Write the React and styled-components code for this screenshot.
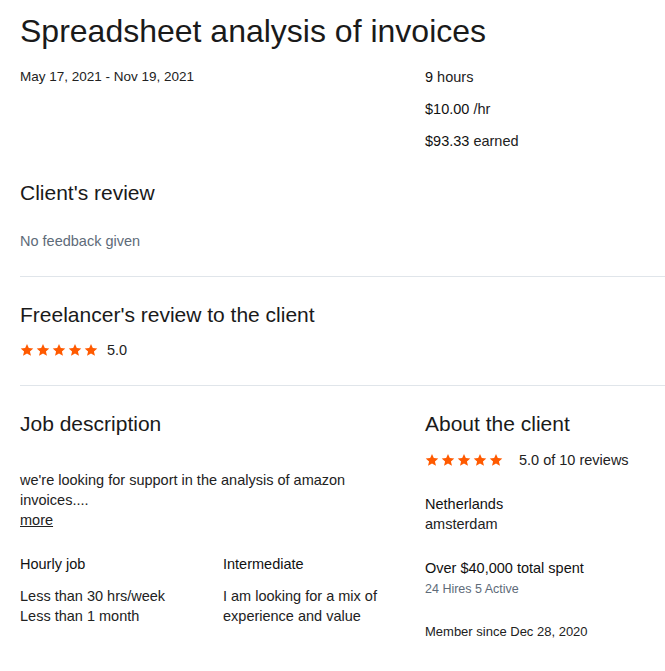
import React from "react";
import styled, { createGlobalStyle } from "styled-components";

const GlobalStyle = createGlobalStyle`
  body {
    margin: 0;
    background: #fff;
    font-family: "Liberation Sans", Arial, sans-serif;
    color: #1f1f1f;
  }
`;

const ORANGE = "#ff5a00";

const Star = ({ size = 14 }) => (
  <svg width={size} height={size} viewBox="0 0 24 24">
    <path
      fill={ORANGE}
      d="M12 1.5l3.1 7.1 7.7.7-5.8 5.1 1.8 7.6L12 18l-6.8 4 1.8-7.6-5.8-5.1 7.7-.7z"
    />
  </svg>
);

const Stars = ({ count = 5 }) => (
  <StarRow>
    {Array.from({ length: count }).map((_, i) => (
      <Star key={i} />
    ))}
  </StarRow>
);

const App = () => {
  return (
    <React.Fragment>
      <GlobalStyle />
      <Page>
        <Title>Spreadsheet analysis of invoices</Title>

        <MetaGrid>
          <DateRange>May 17, 2021 - Nov 19, 2021</DateRange>
          <MetaList>
            <Text>
              <Strong>9</Strong> hours
            </Text>
            <Text>
              <Strong>$10.00</Strong> /hr
            </Text>
            <Text>
              <Strong>$93.33</Strong> earned
            </Text>
          </MetaList>
        </MetaGrid>

        <Section>
          <Heading>Client's review</Heading>
          <Muted $top={26}>No feedback given</Muted>
        </Section>

        <Divider />

        <Section $top={26}>
          <Heading>Freelancer's review to the client</Heading>
          <RatingRow $top={13}>
            <Stars />
            <Text>5.0</Text>
          </RatingRow>
        </Section>

        <Divider />

        <Columns>
          <Column>
            <Heading>Job description</Heading>
            <Description>
              we're looking for support in the analysis of amazon invoices....
              <br />
              <More href="#">more</More>
            </Description>
            <JobFacts>
              <Fact>
                <Label>Hourly job</Label>
                <Text>Less than 30 hrs/week</Text>
                <Text>Less than 1 month</Text>
              </Fact>
              <Fact>
                <Label>Intermediate</Label>
                <Text>I am looking for a mix of experience and value</Text>
              </Fact>
            </JobFacts>
          </Column>

          <Column>
            <Heading>About the client</Heading>
            <RatingRow $top={14} $gap={16}>
              <Stars />
              <Text>5.0 of 10 reviews</Text>
            </RatingRow>
            <ClientBlock $top={24}>
              <Label>Netherlands</Label>
              <Text>amsterdam</Text>
            </ClientBlock>
            <ClientBlock $top={24}>
              <Label>Over $40,000 total spent</Label>
              <Small $top={3}>24 Hires 5 Active</Small>
            </ClientBlock>
            <Small $top={27} $dark $size={13}>
              Member since Dec 28, 2020
            </Small>
          </Column>
        </Columns>
      </Page>
    </React.Fragment>
  );
};

export default App;

const Page = styled.div`
  padding: 12px 0 40px 20px;
  width: 645px;
`;

const Title = styled.h1`
  margin: 0;
  font-size: 32px;
  line-height: 38px;
  font-weight: 400;
  color: #1a1a1a;
`;

const MetaGrid = styled.div`
  display: grid;
  grid-template-columns: 405px 1fr;
  margin-top: 17px;
`;

const MetaList = styled.div`
  display: flex;
  flex-direction: column;
  gap: 12px;
`;

const Text = styled.div`
  font-size: 14.5px;
  line-height: 20px;
  color: #222;
`;

const DateRange = styled(Text)`
  font-size: 13.5px;
`;

const Strong = styled.span`
  font-weight: 500;
  color: #111;
`;

const Section = styled.div`
  margin-top: ${(p) => p.$top ?? 30}px;
  padding-bottom: 25px;
`;

const Heading = styled.h2`
  margin: 0;
  font-size: 21px;
  line-height: 24px;
  font-weight: 400;
  color: #1a1a1a;
`;

const Muted = styled.div`
  margin-top: ${(p) => p.$top}px;
  font-size: 14.5px;
  line-height: 20px;
  color: #5e6b79;
`;

const Divider = styled.hr`
  margin: 0;
  border: 0;
  border-top: 1px solid #e0e5ea;
`;

const StarRow = styled.div`
  display: flex;
  gap: 2px;
  align-items: center;
`;

const RatingRow = styled.div`
  display: flex;
  align-items: center;
  gap: ${(p) => p.$gap ?? 9}px;
  margin-top: ${(p) => p.$top}px;
`;

const Columns = styled.div`
  display: grid;
  grid-template-columns: 405px 1fr;
  margin-top: 26px;
`;

const Column = styled.div`
  display: flex;
  flex-direction: column;
`;

const Description = styled.div`
  margin-top: 34px;
  font-size: 14.5px;
  line-height: 20px;
  color: #222;
  width: 350px;
`;

const More = styled.a`
  color: #222;
  text-decoration: underline;
`;

const JobFacts = styled.div`
  display: grid;
  grid-template-columns: 203px 170px;
  margin-top: 24px;
`;

const Fact = styled.div`
  display: flex;
  flex-direction: column;

  > ${Text}:nth-child(2) {
    margin-top: 12px;
  }
`;

const Label = styled.div`
  font-size: 14.5px;
  line-height: 20px;
  font-weight: 500;
  color: #111;
`;

const ClientBlock = styled.div`
  margin-top: ${(p) => p.$top}px;
`;

const Small = styled.div`
  margin-top: ${(p) => p.$top}px;
  font-size: ${(p) => p.$size ?? 12.5}px;
  line-height: 16px;
  color: ${(p) => (p.$dark ? "#222" : "#5e6b79")};
`;
